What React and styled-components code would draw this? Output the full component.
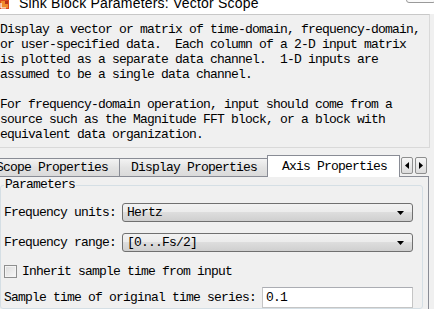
import React from 'react'
import styled, { createGlobalStyle } from 'styled-components'

const mono = '"Liberation Mono", "DejaVu Sans Mono", monospace'

const GlobalStyle = createGlobalStyle`
    html, body {
        margin: 0;
        padding: 0;
        background: #f0f0f0;
    }
`

const Window = styled.div`
    width: 434px;
    height: 309px;
    overflow: hidden;
    display: flex;
    flex-direction: column;
    background: #f0f0f0;
    font-family: ${mono};
    font-size: 13px;
    letter-spacing: -0.8px;
    color: #000;
`

const TitleBar = styled.div`
    flex: none;
    height: 14px;
    display: flex;
    align-items: flex-start;
    background: #fff;
    overflow: hidden;
`

const TitleIcon = styled.svg`
    flex: none;
    width: 9px;
    height: 9px;
`

const Title = styled.div`
    margin: -5px 0 0 10px;
    font-family: "Liberation Sans", Arial, sans-serif;
    font-size: 14px;
    line-height: 17px;
    letter-spacing: 0.2px;
    white-space: nowrap;
`

const CloseButton = styled.div`
    margin: -6px -2px 0 auto;
    width: 30px;
    height: 9px;
    box-sizing: border-box;
    border: 1px solid #9a9a9a;
    border-radius: 3px;
    background: #fafafa;
`

const Description = styled.div`
    flex: none;
    width: 430px;
    box-sizing: border-box;
    padding: 7px 0 5px 0;
    border-top: 1px solid #c8c8c8;
    border-right: 1px solid #d9d9d9;
    border-bottom: 1px solid #d9d9d9;
    line-height: 15px;
    white-space: pre;
`

const TabStrip = styled.div`
    flex: none;
    height: 28px;
    margin-left: -16px;
    display: flex;
    align-items: flex-end;
`

const Tab = styled.div`
    box-sizing: border-box;
    height: ${p => (p.$active ? 22 : 18)}px;
    line-height: ${p => (p.$active ? 21 : 17)}px;
    padding: ${p => (p.$active ? '0 12px 0 14px' : '0 11px')};
    margin-left: ${p => (p.$active ? -2 : -1)}px;
    margin-bottom: ${p => (p.$active ? -1 : 0)}px;
    border: 1px solid #898c95;
    border-bottom: none;
    background: ${p => (p.$active ? '#fff' : 'linear-gradient(#f3f3f3, #e3e3e3 50%, #dadada)')};
    position: relative;
    z-index: ${p => (p.$active ? 1 : 0)};
    white-space: nowrap;

    &:first-child {
        margin-left: 0;
    }
`

const ScrollArrows = styled.div`
    display: flex;
    gap: 2px;
    margin: 0 0 2px 1px;
`

const ArrowButton = styled.div`
    width: 12px;
    height: 17px;
    box-sizing: border-box;
    border: 1px solid #8e8f8f;
    border-radius: 2px;
    background: linear-gradient(#f6f6f6, #dcdcdc);
    display: flex;
    align-items: center;
    justify-content: center;
`

const Panel = styled.div`
    flex: 1;
    width: 439px;
    margin-left: -10px;
    box-sizing: border-box;
    padding: 0 5px 0 9px;
    border: 1px solid #898c95;
    border-bottom: none;
`

const Group = styled.fieldset`
    margin: 0;
    min-width: 0;
    padding: 0 9px 0 3px;
    border: 1px solid #d5dfe5;
    border-radius: 3px;
`

const Legend = styled.legend`
    padding: 0 1px;
    line-height: 16px;
`

const Row = styled.div`
    display: flex;
    align-items: center;
    gap: ${p => p.$gap ?? 6}px;
    margin-top: ${p => p.$top}px;
    white-space: pre;
`

const Select = styled.div`
    flex: 1;
    height: 19px;
    box-sizing: border-box;
    display: flex;
    align-items: center;
    justify-content: space-between;
    padding: 0 7px 0 4px;
    border: 1px solid #707070;
    border-radius: 3px;
    background: linear-gradient(#f2f2f2, #ebebeb 50%, #dddddd 50%, #cfcfcf);
    line-height: 17px;
`

const Checkbox = styled.div`
    width: 13px;
    height: 13px;
    box-sizing: border-box;
    border: 1px solid #8e8f8f;
    background: linear-gradient(135deg, #dcdcdc, #f8f8f8);
    box-shadow: inset 0 0 0 1px #f4f4f4;
`

const TextInput = styled.div`
    flex: 1;
    height: 21px;
    box-sizing: border-box;
    padding-left: 3px;
    border: 1px solid #c5c5c5;
    border-top-color: #abadb3;
    background: #fff;
    line-height: 19px;
`

const descriptionLines = [
    'Display a vector or matrix of time-domain, frequency-domain,',
    'or user-specified data.  Each column of a 2-D input matrix',
    'is plotted as a separate data channel.  1-D inputs are',
    'assumed to be a single data channel.',
    '',
    'For frequency-domain operation, input should come from a',
    'source such as the Magnitude FFT block, or a block with',
    'equivalent data organization.',
]

const DropArrow = () => (
    <svg width="8" height="4" viewBox="0 0 8 4">
        <path d="M0 0H7L3.5 4Z" fill="#000" />
    </svg>
)

const App = () => {
    return (
        <Window>
            <GlobalStyle />
            <TitleBar>
                <TitleIcon viewBox="0 0 9 9">
                    <rect x="0" y="0" width="9" height="9" fill="#d9481c" />
                    <rect x="1" y="1" width="7" height="7" fill="#f08a2c" />
                    <path d="M1 8V3M1 8H6" stroke="#fff" strokeWidth="1.2" />
                    <rect x="5" y="1" width="3" height="3" fill="#b8321a" />
                </TitleIcon>
                <Title>Sink Block Parameters: Vector Scope</Title>
                <CloseButton />
            </TitleBar>
            <Description>
                {descriptionLines.map((line, i) => (
                    <div key={i}>{line || ' '}</div>
                ))}
            </Description>
            <TabStrip>
                <Tab>Scope Properties</Tab>
                <Tab>Display Properties</Tab>
                <Tab $active>Axis Properties</Tab>
                <ScrollArrows>
                    <ArrowButton>
                        <svg width="4" height="7" viewBox="0 0 4 7">
                            <path d="M4 0V7L0 3.5Z" fill="#000" />
                        </svg>
                    </ArrowButton>
                    <ArrowButton>
                        <svg width="4" height="7" viewBox="0 0 4 7">
                            <path d="M0 0V7L4 3.5Z" fill="#000" />
                        </svg>
                    </ArrowButton>
                </ScrollArrows>
            </TabStrip>
            <Panel>
                <Group>
                    <Legend>Parameters</Legend>
                    <Row $top={10}>
                        <span>Frequency units:</span>
                        <Select>
                            <span>Hertz</span>
                            <DropArrow />
                        </Select>
                    </Row>
                    <Row $top={11}>
                        <span>Frequency range:</span>
                        <Select>
                            <span>[0...Fs/2]</span>
                            <DropArrow />
                        </Select>
                    </Row>
                    <Row $top={12} $gap={5}>
                        <Checkbox />
                        <span>Inherit sample time from input</span>
                    </Row>
                    <Row $top={8}>
                        <span>Sample time of original time series:</span>
                        <TextInput>0.1</TextInput>
                    </Row>
                </Group>
            </Panel>
        </Window>
    )
}

export default App
